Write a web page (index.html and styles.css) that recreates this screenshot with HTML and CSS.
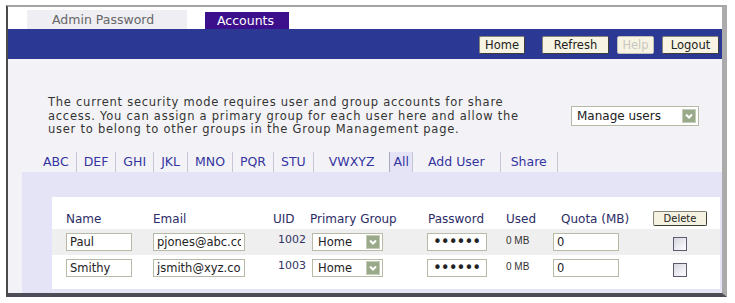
FILE: index.html
```html
<!DOCTYPE html>
<html lang="en">
<head>
  <meta charset="UTF-8" />
  <meta name="viewport" content="width=device-width, initial-scale=1.0"/>
  <title>Accounts</title>
  <link rel="stylesheet" href="styles.css">
</head>
<body>
  <div class="frame">
    <div class="top-tabs">
      <span class="tab tab-off">Admin Password</span>
      <span class="tab tab-on">Accounts</span>
    </div>

    <div class="toolbar">
      <button class="tool-btn" id="home-btn">Home</button>
      <button class="tool-btn" id="refresh-btn">Refresh</button>
      <button class="tool-btn" id="help-btn" disabled>Help</button>
      <button class="tool-btn" id="logout-btn">Logout</button>
    </div>

    <div class="content">
      <div class="intro">
        <p>The current security mode requires user and group accounts for share<br>
          access. You can assign a primary group for each user here and allow the<br>
          user to belong to other groups in the Group Management page.</p>
        <div class="dropdown mode-select">
          <span>Manage users</span>
          <span class="arrow"><svg viewBox="0 0 14 14" width="14" height="14"><rect x="0" y="0" width="14" height="14" fill="#9aa989"/><rect x="0.5" y="0.5" width="13" height="13" fill="none" stroke="#c3ccb5"/><path d="M4 5.5 L7 8.5 L10 5.5" stroke="#fff" stroke-width="2" fill="none"/></svg></span>
        </div>
      </div>

      <nav class="letter-tabs">
        <a href="#">ABC</a>
        <a href="#">DEF</a>
        <a href="#">GHI</a>
        <a href="#">JKL</a>
        <a href="#">MNO</a>
        <a href="#">PQR</a>
        <a href="#">STU</a>
        <a href="#" class="wide">VWXYZ</a>
        <a href="#" class="active">All</a>
        <a href="#" class="wide">Add User</a>
        <a href="#" class="mid">Share</a>
      </nav>

      <div class="panel">
        <div class="users">
          <div class="user-row head">
            <span>Name</span>
            <span>Email</span>
            <span class="uid-head">UID</span>
            <span>Primary Group</span>
            <span class="pass-head">Password</span>
            <span>Used</span>
            <span class="quota-head">Quota (MB)</span>
            <button class="delete-btn">Delete</button>
          </div>

          <div class="user-row shaded">
            <input class="field name-field" type="text" value="Paul">
            <input class="field email-field" type="text" value="pjones@abc.com">
            <span class="uid">1002</span>
            <div class="dropdown group-select">
              <span>Home</span>
              <span class="arrow"><svg viewBox="0 0 14 14" width="14" height="14"><rect x="0" y="0" width="14" height="14" fill="#9aa989"/><rect x="0.5" y="0.5" width="13" height="13" fill="none" stroke="#c3ccb5"/><path d="M4 5.5 L7 8.5 L10 5.5" stroke="#fff" stroke-width="2" fill="none"/></svg></span>
            </div>
            <input class="field pass-field" type="password" value="secret">
            <span class="used">0 MB</span>
            <input class="field quota-field" type="text" value="0">
            <input class="check" type="checkbox">
          </div>

          <div class="user-row">
            <input class="field name-field" type="text" value="Smithy">
            <input class="field email-field" type="text" value="jsmith@xyz.com">
            <span class="uid">1003</span>
            <div class="dropdown group-select">
              <span>Home</span>
              <span class="arrow"><svg viewBox="0 0 14 14" width="14" height="14"><rect x="0" y="0" width="14" height="14" fill="#9aa989"/><rect x="0.5" y="0.5" width="13" height="13" fill="none" stroke="#c3ccb5"/><path d="M4 5.5 L7 8.5 L10 5.5" stroke="#fff" stroke-width="2" fill="none"/></svg></span>
            </div>
            <input class="field pass-field" type="password" value="secret">
            <span class="used">0 MB</span>
            <input class="field quota-field" type="text" value="0">
            <input class="check" type="checkbox">
          </div>
        </div>
      </div>
    </div>
  </div>
</body>
</html>
```

FILE: styles.css
```css
body {
  margin: 0;
  background: #fff;
  font-family: "DejaVu Sans", Verdana, sans-serif;
  font-size: 12px;
  color: #333;
}

.frame {
  margin: 5px 0 0 6px;
  width: 714px;
  border-left: 2px solid #4a4a4a;
  border-top: 2px solid #a4a4a4;
  border-right: 5px solid #ababab;
  border-bottom: 4px solid #4d4d58;
}

/* top tabs */
.top-tabs {
  height: 22px;
  display: flex;
  align-items: flex-end;
  background: #fff;
}

.tab {
  height: 19px;
  line-height: 19px;
  font-size: 12.5px;
}

.tab-off {
  margin-left: 19px;
  width: 135px;
  padding-left: 25px;
  background: #eeeef3;
  color: #666;
}

.tab-on {
  margin-left: 18px;
  width: 72px;
  padding-left: 12px;
  height: 17px;
  line-height: 17px;
  background: #3c0f8c;
  color: #fff;
}

/* blue bar */
.toolbar {
  height: 30px;
  box-sizing: border-box;
  padding: 2px 3px 0 0;
  background: #2b3995;
  display: flex;
  justify-content: flex-end;
  align-items: center;
}

.tool-btn {
  height: 18px;
  padding: 0;
  margin-left: 8px;
  font: 11.5px "DejaVu Sans", Verdana, sans-serif;
  color: #222;
  background: #f7f4e4;
  border: 1px solid #85857a;
  border-right-color: #3d3d38;
  border-bottom-color: #3d3d38;
  border-radius: 2px;
}

#home-btn { width: 46px; }
#refresh-btn { width: 67px; margin-left: 17px; }
#help-btn { width: 37px; color: #c8c8c2; border-color: #c0c0b8; }
#logout-btn { width: 57px; }

/* content */
.content {
  background: #f3f3f7;
  padding-top: 37px;
}

.intro {
  display: flex;
  align-items: center;
  padding: 0 23px 0 40px;
}

.intro p {
  margin: 0;
  font-size: 11.5px;
  line-height: 13.5px;
  letter-spacing: 0.75px;
  white-space: nowrap;
  color: #333;
}

.dropdown {
  box-sizing: border-box;
  display: flex;
  align-items: center;
  justify-content: space-between;
  border: 1px solid #b7baa6;
  background: #fff;
  color: #222;
  padding-left: 5px;
}

.arrow {
  display: flex;
  margin-right: 2px;
}

.mode-select {
  margin-left: auto;
  width: 128px;
  height: 20px;
  font-size: 12px;
}

/* letter tabs */
.letter-tabs {
  display: flex;
  margin-top: 15px;
  padding-left: 32px;
  height: 20px;
}

.letter-tabs a {
  padding: 0 7px;
  border-right: 1px solid #c6c6d4;
  line-height: 20px;
  font-size: 12.5px;
  color: #3434a0;
  text-decoration: none;
}

.letter-tabs a:first-child { padding-left: 3px; }
.letter-tabs a.wide { padding: 0 15px; }
.letter-tabs a.mid { padding: 0 10px; }

.letter-tabs a.active {
  padding: 0 3px;
  background: #e4e4f6;
  border-left: 1px solid #a9a9c0;
  margin-left: -1px;
}

/* users table */
.panel {
  margin-left: 14px;
  background: #e4e4f6;
  padding: 25px 2px 4px 30px;
}

.users {
  background: #fff;
  padding: 12px 0 8px;
}

.user-row {
  display: grid;
  grid-template-columns: 87px 117px 40px 117px 79px 47px 100px 54px;
  padding-left: 14px;
  height: 26px;
  align-items: start;
}

.user-row.head {
  height: 20px;
  align-items: center;
  color: #2c2c66;
  font-size: 12px;
}

.user-row.shaded {
  background: #efeff0;
}

.uid-head { padding-left: 3px; }
.pass-head { padding-left: 1px; }
.quota-head { padding-left: 8px; }

.delete-btn {
  width: 54px;
  height: 15px;
  padding: 0;
  font: 10px "DejaVu Sans", Verdana, sans-serif;
  color: #222;
  background: #f5f2e2;
  border: 1px solid #85857a;
  border-right-color: #3d3d38;
  border-bottom-color: #3d3d38;
  border-radius: 2px;
}

.field {
  box-sizing: border-box;
  height: 18px;
  margin: 4px 0 0;
  border: 1px solid #b7baa6;
  padding: 0 3px;
  font: 11.5px "DejaVu Sans", Verdana, sans-serif;
  color: #222;
  background: #fff;
}

.name-field { width: 66px; }
.email-field { width: 92px; }
.pass-field { width: 60px; padding-left: 5px; font-size: 15px; letter-spacing: -1px; }
.quota-field { width: 66px; }

.uid {
  margin-top: 5px;
  padding-right: 4px;
  text-align: right;
  font-size: 11px;
  line-height: 12px;
  color: #333366;
}

.group-select {
  width: 71px;
  height: 18px;
  margin: 4px 0 0 2px;
  font-size: 11.5px;
}

.used {
  margin-top: 6px;
  font: 10px "Liberation Sans", Arial, sans-serif;
  color: #333;
}

.check {
  appearance: none;
  justify-self: center;
  width: 14px;
  height: 14px;
  margin: 8px 0 0;
  border: 1px solid #5b5b70;
  background: linear-gradient(135deg, #d6d6e2, #fff);
}
```
